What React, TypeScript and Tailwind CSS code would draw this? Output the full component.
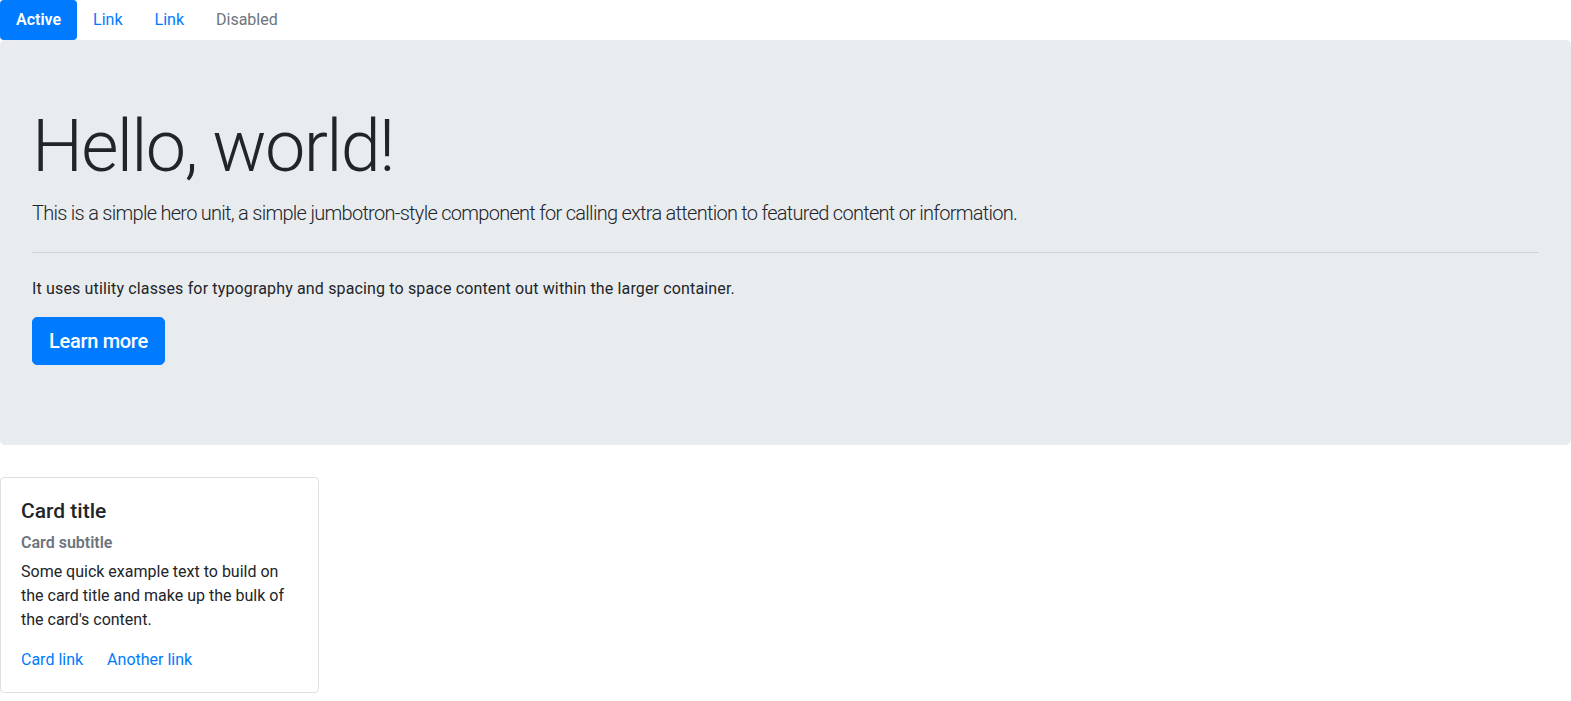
import React from 'react';

const navItems = [
  { label: 'Active', state: 'active' },
  { label: 'Link', state: 'link' },
  { label: 'Link', state: 'link' },
  { label: 'Disabled', state: 'disabled' },
];

const App: React.FC = () => {
  return (
    <div className="min-h-screen bg-white text-[#212529] font-['Roboto',sans-serif] text-[16px] leading-[1.5]">
      <ul className="flex">
        {navItems.map((item, i) => (
          <li key={i}>
            <a
              href="#"
              className={`block px-4 py-2 rounded-[4px] ${
                item.state === 'active'
                  ? 'bg-[#007bff] text-white font-semibold'
                  : item.state === 'disabled'
                  ? 'text-[#6c757d]'
                  : 'text-[#007bff]'
              }`}
            >
              {item.label}
            </a>
          </li>
        ))}
      </ul>

      <div className="bg-[#e9ecef] rounded-[5px] px-8 pt-16 pb-[80px] mb-8">
        <h1 className="text-[72px] font-light leading-[1.2] tracking-[-1.7px] mb-2">Hello, world!</h1>
        <p className="text-[20px] font-light leading-[1.5] tracking-[-0.72px] mb-6">
          This is a simple hero unit, a simple jumbotron-style component for calling extra attention to featured content or information.
        </p>
        <hr className="border-0 border-t border-black/10 mb-6" />
        <p className="mb-4 tracking-[0.15px]">
          It uses utility classes for typography and spacing to space content out within the larger container.
        </p>
        <a
          href="#"
          className="inline-block bg-[#007bff] border border-[#007bff] text-white text-[20px] font-medium leading-[1.5] tracking-[-0.3px] px-4 py-2 rounded-[5px]"
        >
          Learn more
        </a>
      </div>

      <div className="w-[319px] border border-black/[0.125] rounded-[4px]">
        <div className="px-5 pt-[21px] pb-5">
          <h5 className="text-[21px] font-medium leading-[1.2] mb-3">Card title</h5>
          <h6 className="text-[16px] font-semibold leading-[1.2] text-[#6c757d] -mt-1 mb-2">Card subtitle</h6>
          <p className="mb-4">Some quick example text to build on the card title and make up the bulk of the card's content.</p>
          <div className="flex gap-6">
            <a href="#" className="text-[#007bff]">Card link</a>
            <a href="#" className="text-[#007bff]">Another link</a>
          </div>
        </div>
      </div>
    </div>
  );
};

export default App;
